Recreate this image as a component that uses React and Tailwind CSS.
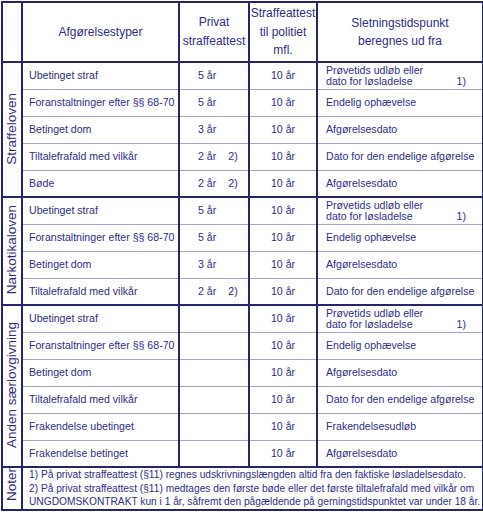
const sections = [
  {
    label: 'Straffeloven',
    rows: [
      { type: 'Ubetinget straf', privat: '5 år', politi: '10 år', slet: ['Prøvetids udløb eller', 'dato for løsladelse'], note: '1)' },
      { type: 'Foranstaltninger efter §§ 68-70', privat: '5 år', politi: '10 år', slet: 'Endelig ophævelse' },
      { type: 'Betinget dom', privat: '3 år', politi: '10 år', slet: 'Afgørelsesdato' },
      { type: 'Tiltalefrafald med vilkår', privat: '2 år', pnote: '2)', politi: '10 år', slet: 'Dato for den endelige afgørelse' },
      { type: 'Bøde', privat: '2 år', pnote: '2)', politi: '10 år', slet: 'Afgørelsesdato' },
    ],
  },
  {
    label: 'Narkotikaloven',
    rows: [
      { type: 'Ubetinget straf', privat: '5 år', politi: '10 år', slet: ['Prøvetids udløb eller', 'dato for løsladelse'], note: '1)' },
      { type: 'Foranstaltninger efter §§ 68-70', privat: '5 år', politi: '10 år', slet: 'Endelig ophævelse' },
      { type: 'Betinget dom', privat: '3 år', politi: '10 år', slet: 'Afgørelsesdato' },
      { type: 'Tiltalefrafald med vilkår', privat: '2 år', pnote: '2)', politi: '10 år', slet: 'Dato for den endelige afgørelse' },
    ],
  },
  {
    label: 'Anden særlovgivning',
    rows: [
      { type: 'Ubetinget straf', privat: '', politi: '10 år', slet: ['Prøvetids udløb eller', 'dato for løsladelse'], note: '1)' },
      { type: 'Foranstaltninger efter §§ 68-70', privat: '', politi: '10 år', slet: 'Endelig ophævelse' },
      { type: 'Betinget dom', privat: '', politi: '10 år', slet: 'Afgørelsesdato' },
      { type: 'Tiltalefrafald med vilkår', privat: '', politi: '10 år', slet: 'Dato for den endelige afgørelse' },
      { type: 'Frakendelse ubetinget', privat: '', politi: '10 år', slet: 'Frakendelsesudløb' },
      { type: 'Frakendelse betinget', privat: '', politi: '10 år', slet: 'Afgørelsesdato' },
    ],
  },
];

const dark = 'border-[#25256f]';
const light = 'border-b-[#a3a3cb]';

function SideLabel({ children }) {
  return (
    <span className="inline-block [writing-mode:vertical-rl] rotate-180 text-[13.5px] leading-[16px] whitespace-nowrap">
      {children}
    </span>
  );
}

export default function App() {
  return (
    <div className="bg-white w-[483px] h-[512px] pl-[1px] pt-[1px] text-[#2e2e88] [font-family:'Liberation_Sans',Arial,sans-serif]">
      <table className={`table-fixed border-collapse border-2 ${dark} w-[481px]`}>
        <colgroup>
          <col className="w-[20px]" />
          <col className="w-[157px]" />
          <col className="w-[70px]" />
          <col className="w-[68px]" />
          <col className="w-[166px]" />
        </colgroup>
        <thead>
          <tr className="h-[60px]">
            <th className={`border-2 ${dark}`}></th>
            <th className={`border-2 ${dark} font-normal text-[12px] text-center`}>Afgørelsestyper</th>
            <th className={`border-2 ${dark} font-normal text-[12px] leading-[19px] text-center whitespace-nowrap`}>
              Privat<br />straffeattest
            </th>
            <th className={`border-2 ${dark} font-normal text-[12px] leading-[18.5px] text-center`}>
              Straffeattest<br />til politiet<br />mfl.
            </th>
            <th className={`border-2 ${dark} font-normal text-[12px] leading-[18px] text-center`}>
              Sletningstidspunkt<br />beregnes ud fra
            </th>
          </tr>
        </thead>
        <tbody>
          {sections.map((sec) =>
            sec.rows.map((r, i) => {
              const last = i === sec.rows.length - 1;
              const rowB = last ? `border-b-2 border-b-[#25256f]` : `border-b ${light}`;
              return (
                <tr key={sec.label + i} className="h-[27px] text-[10.6px] leading-[11px]">
                  {i === 0 && (
                    <td rowSpan={sec.rows.length} className={`border-2 ${dark} text-center align-middle p-0`}>
                      <SideLabel>{sec.label}</SideLabel>
                    </td>
                  )}
                  <td className={`${rowB} border-r-2 border-r-[#25256f] pl-[6px] whitespace-nowrap`}>{r.type}</td>
                  <td className={`${rowB} border-r-2 border-r-[#25256f] pl-[18px] whitespace-nowrap`}>
                    {r.privat}
                    {r.pnote && <span className="ml-[12px]">{r.pnote}</span>}
                  </td>
                  <td className={`${rowB} border-r-2 border-r-[#25256f] text-center`}>{r.politi}</td>
                  <td className={`${rowB} pl-[8px] pr-[16px] whitespace-nowrap`}>
                    {Array.isArray(r.slet) ? (
                      <div className="flex flex-col">
                        <span>{r.slet[0]}</span>
                        <span className="flex justify-between">
                          <span>{r.slet[1]}</span>
                          <span>{r.note}</span>
                        </span>
                      </div>
                    ) : (
                      r.slet
                    )}
                  </td>
                </tr>
              );
            })
          )}
          <tr className="h-[42px]">
            <td className={`border-2 ${dark} text-center align-middle p-0`}>
              <SideLabel>Noter</SideLabel>
            </td>
            <td colSpan={4} className={`border-2 ${dark} pl-[6px] text-[10.2px] leading-[13.5px] whitespace-nowrap`}>
              1) På privat straffeattest (§11) regnes udskrivningslængden altid fra den faktiske løsladelsesdato.<br />
              2) På privat straffeattest (§11) medtages den første bøde eller det første tiltalefrafald med vilkår om<br />
              UNGDOMSKONTRAKT kun i 1 år, såfremt den pågældende på gerningstidspunktet var under 18 år.
            </td>
          </tr>
        </tbody>
      </table>
    </div>
  );
}
